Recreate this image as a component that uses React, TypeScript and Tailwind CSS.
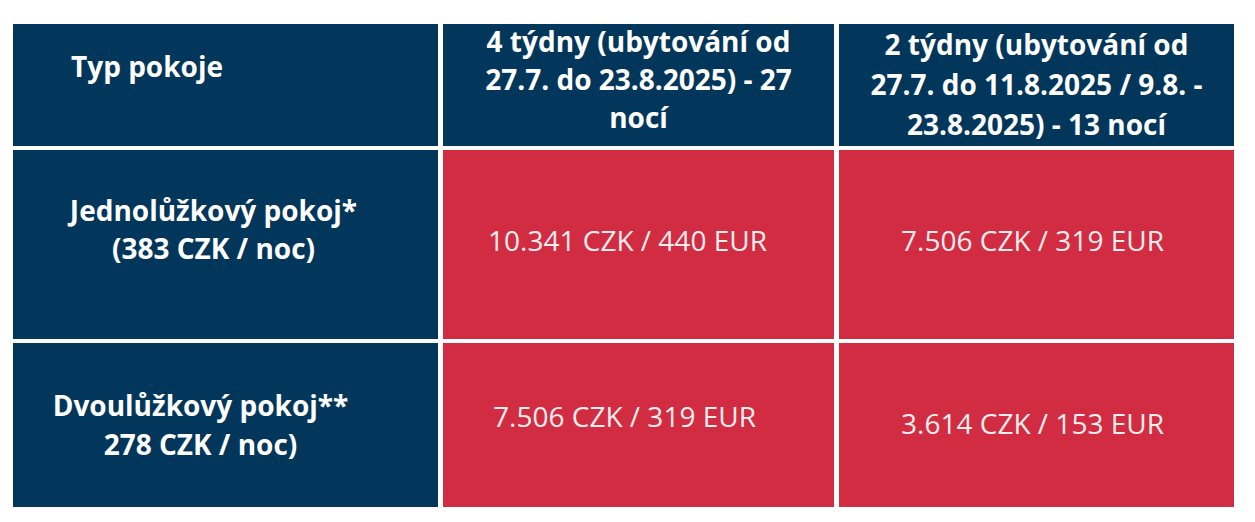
import React from 'react'

const navy = 'bg-[#02365a]'
const red = 'bg-[#d12c41]'

const App = () => {
  return (
    <div className="w-[1255px] h-[522px] bg-white pl-[13px] pt-[24px] font-['Open_Sans',sans-serif]">
      <div className="grid grid-cols-[425px_391px_395px] grid-rows-[122px_189px_164px] gap-x-[5px] gap-y-[4px]">
        {/* header row */}
        <div className={`${navy} flex items-start pl-[58px] pt-[23px]`}>
          <span className="text-white font-bold text-[28px] leading-[38px]">Typ pokoje</span>
        </div>
        <div className={`${navy} flex justify-center items-start`}>
          <span className="block -mt-[2px] text-white font-bold text-[28px] leading-[38px] text-center">
            4 týdny (ubytování od<br />27.7. do 23.8.2025) - 27<br />nocí
          </span>
        </div>
        <div className={`${navy} flex justify-center items-start`}>
          <span className="text-white font-bold text-[28px] leading-[40px] text-center">
            2 týdny (ubytování od<br />27.7. do 11.8.2025 / 9.8. -<br />23.8.2025) - 13 nocí
          </span>
        </div>

        {/* single room */}
        <div className={`${navy} flex items-center justify-center pr-[24px] pb-[32px]`}>
          <span className="text-white font-bold text-[28px] leading-[38px] text-center">
            Jednolůžkový pokoj*<br />(383 CZK / noc)
          </span>
        </div>
        <div className={`${red} flex items-center justify-center pr-[22px] pb-[10px]`}>
          <span className="text-[#fbeef0] text-[28px] leading-[38px]">10.341 CZK / 440 EUR</span>
        </div>
        <div className={`${red} flex items-center justify-center pr-[8px] pb-[10px]`}>
          <span className="text-[#fbeef0] text-[28px] leading-[38px]">7.506 CZK / 319 EUR</span>
        </div>

        {/* double room */}
        <div className={`${navy} flex items-center justify-center pr-[50px]`}>
          <span className="text-white font-bold text-[28px] leading-[39px] text-center">
            Dvoulůžkový pokoj**<br />278 CZK / noc)
          </span>
        </div>
        <div className={`${red} flex items-center justify-center pr-[28px] pb-[18px]`}>
          <span className="text-[#fbeef0] text-[28px] leading-[38px]">7.506 CZK / 319 EUR</span>
        </div>
        <div className={`${red} flex items-center justify-center pr-[8px] pb-[4px]`}>
          <span className="text-[#fbeef0] text-[28px] leading-[38px]">3.614 CZK / 153 EUR</span>
        </div>
      </div>
    </div>
  )
}

export default App
